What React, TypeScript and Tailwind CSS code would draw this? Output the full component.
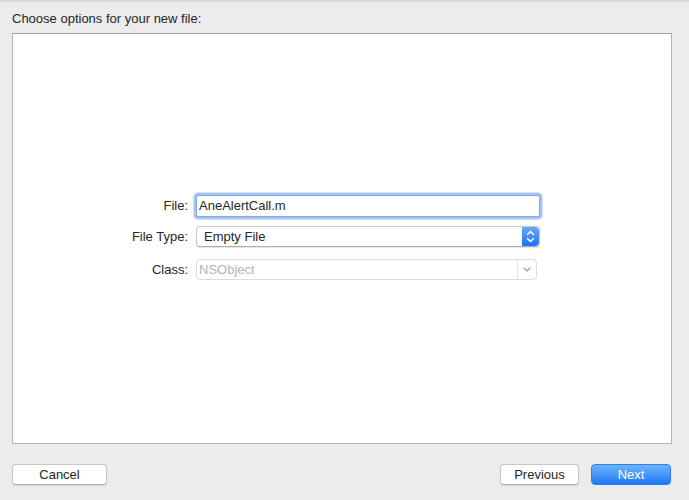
const font = { fontFamily: '"Liberation Sans", Arial, sans-serif' };

function Stepper() {
  return (
    <div className="w-[17px] h-full rounded-r-[4px] bg-gradient-to-b from-[#66aaf9] to-[#1a6ff3] flex items-center justify-center">
      <svg width="9" height="13" viewBox="0 0 9 13" fill="none" stroke="white" strokeWidth="1.5" strokeLinecap="round" strokeLinejoin="round">
        <path d="M1.5 4.5 4.5 1.5 7.5 4.5" />
        <path d="M1.5 8.5 4.5 11.5 7.5 8.5" />
      </svg>
    </div>
  );
}

export default function App() {
  return (
    <div className="w-[689px] h-[500px] bg-[#ececec] flex flex-col text-[13px] text-[#262626]" style={font}>
      <div className="h-[3px] bg-gradient-to-b from-[#d2d2d2] to-[#ececec]" />
      <div className="pt-[8px] pl-[12px] leading-[16px]">Choose options for your new file:</div>

      <div className="mt-[6px] ml-[12px] w-[660px] h-[411px] bg-white border border-[#b3b3b3] border-t-[#a3a3a3] flex flex-col">
        <div className="mt-[161px] flex items-center h-[22px]">
          <div className="w-[175px] text-right">File:</div>
          <div className="ml-[8px] w-[344px] h-[22px] bg-white border border-[#7ea8ea] rounded-[2px] shadow-[0_0_0_2.5px_#a7c5f1] flex items-center pl-[2px]">
            AneAlertCall.m
          </div>
        </div>

        <div className="mt-[9px] flex items-center h-[21px]">
          <div className="w-[175px] text-right">File Type:</div>
          <div className="ml-[8px] w-[344px] h-[21px] bg-white border border-[#c8c8c8] border-b-[#b0b0b0] rounded-[4px] shadow-[0_0.5px_1px_rgba(0,0,0,0.12)] flex items-center justify-between overflow-hidden">
            <span className="pl-[7px]">Empty File</span>
            <Stepper />
          </div>
        </div>

        <div className="mt-[12px] flex items-center h-[21px]">
          <div className="w-[175px] text-right">Class:</div>
          <div className="ml-[8px] w-[341px] h-[21px] bg-white border border-[#dcdcdc] rounded-[4px] flex items-center justify-between">
            <span className="pl-[2px] text-[#b4b4b4]">NSObject</span>
            <div className="h-full w-[19px] border-l border-[#e4e4e4] flex items-center justify-center">
              <svg width="8" height="5" viewBox="0 0 8 5" fill="none" stroke="#9a9a9a" strokeWidth="1.2" strokeLinecap="round" strokeLinejoin="round">
                <path d="M1 1 4 4 7 1" />
              </svg>
            </div>
          </div>
        </div>
      </div>

      <div className="mt-[20px] flex items-center h-[21px]">
        <button className="ml-[12px] w-[95px] h-[21px] bg-white border border-[#c6c6c6] border-b-[#b4b4b4] rounded-[4px] shadow-[0_0.5px_1px_rgba(0,0,0,0.1)] leading-none">
          Cancel
        </button>
        <button className="ml-[393px] w-[79px] h-[21px] bg-white border border-[#c6c6c6] border-b-[#b4b4b4] rounded-[4px] shadow-[0_0.5px_1px_rgba(0,0,0,0.1)] leading-none">
          Previous
        </button>
        <button className="ml-[12px] w-[80px] h-[21px] rounded-[4px] bg-gradient-to-b from-[#6db4fb] to-[#1a78f5] border border-[#2a7ff0] text-white leading-none">
          Next
        </button>
      </div>
    </div>
  );
}
